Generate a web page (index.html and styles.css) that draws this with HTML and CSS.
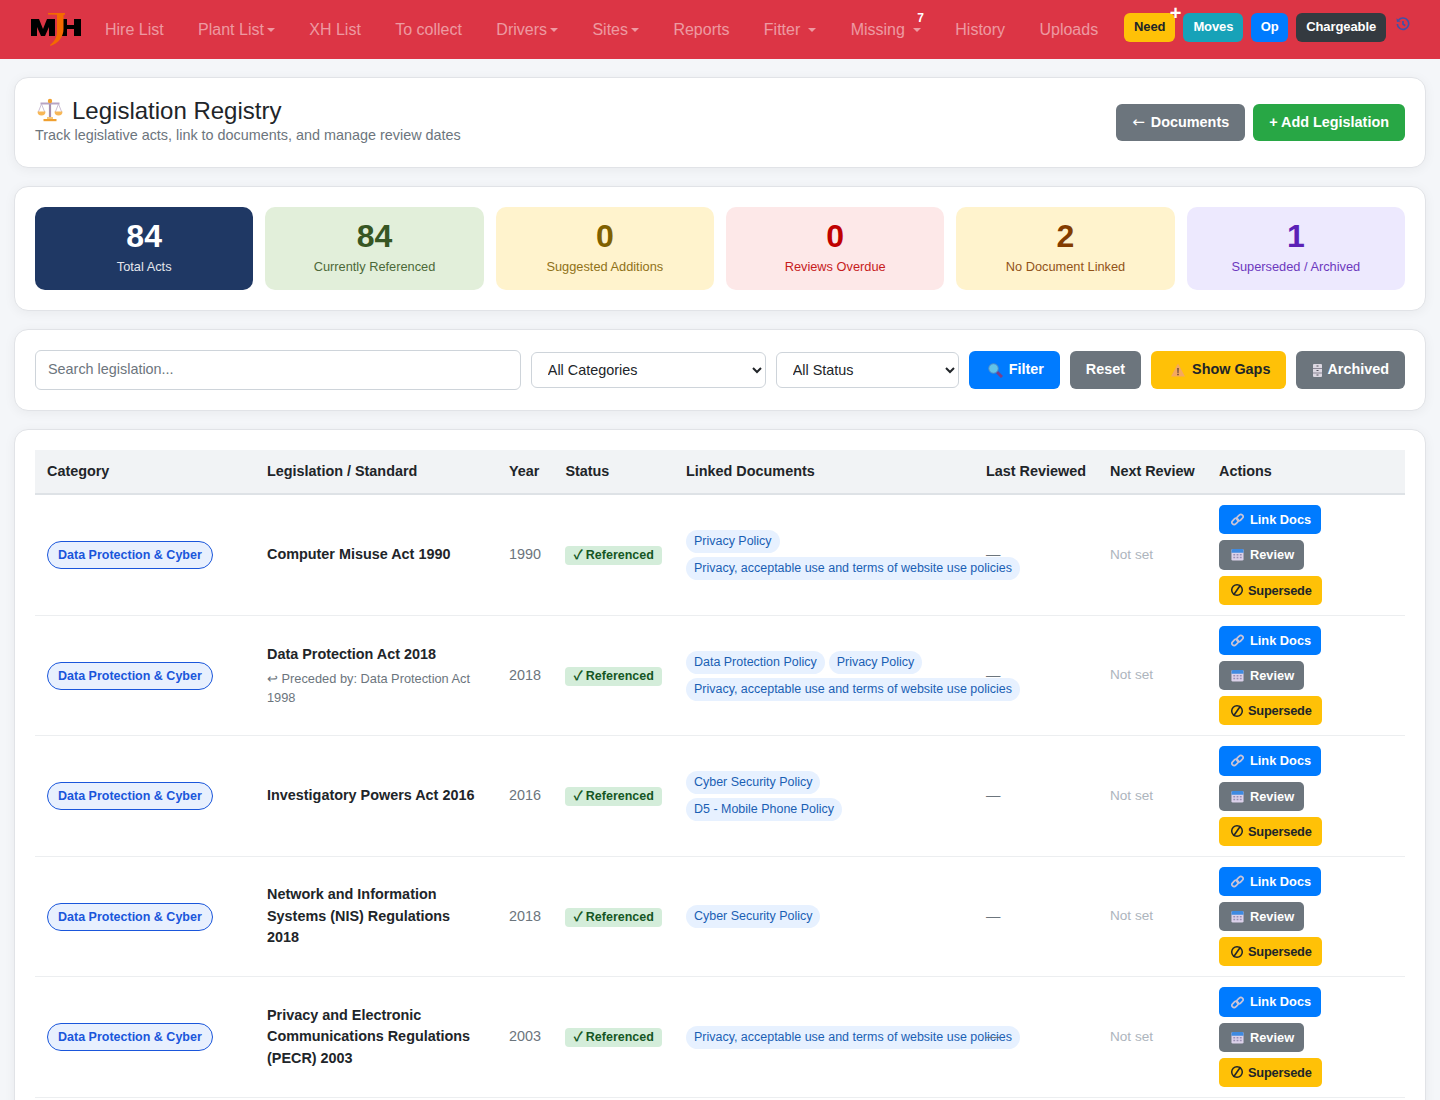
FILE: index.html
```html
<!DOCTYPE html>
<html lang="en">
<head>
<meta charset="utf-8">
<title>Legislation Registry</title>
<link rel="stylesheet" href="styles.css">
</head>
<body>
<svg class="defs" width="0" height="0" aria-hidden="true">
  <defs>
    <symbol id="i-link" viewBox="0 0 14 14"><g fill="none" stroke="#c9c4d8" stroke-width="1.800"><rect x="0.600" y="6.700" width="7.600" height="4.800" rx="2.400" transform="rotate(-45 4.400 9.100)"/><rect x="5.800" y="2.500" width="7.600" height="4.800" rx="2.400" transform="rotate(-45 9.600 4.900)"/></g></symbol>
    <symbol id="i-cal" viewBox="0 0 14 14"><rect x="0.500" y="1" width="13" height="12.500" rx="1.500" fill="#dcd2ea"/><path d="M.5 2.500A1.500 1.500 0 0 1 2 1h10a1.500 1.500 0 0 1 1.500 1.500V5H.5z" fill="#3f8ae0"/><path d="M2.500 6.500h2v1.500h-2zM6 6.500h2v1.500H6zM9.500 6.500h2v1.500h-2zM2.500 9.500h2V11h-2zM6 9.500h2V11H6zM9.500 9.500h2V11h-2z" fill="#9a8fb5"/></symbol>
    <symbol id="i-no" viewBox="0 0 14 14"><circle cx="7" cy="7" r="5.300" fill="none" stroke="#212529" stroke-width="1.500"/><path d="M3.500 12L10.500 2" stroke="#212529" stroke-width="1.600"/></symbol>
  </defs>
</svg>
<nav class="nav">
  <a class="brand" href="#" aria-label="MJH">
    <svg width="52" height="36" viewBox="0 0 52 36"><path d="M1 8h8l4 10 4-10h8v17h-6v-9l-4 9h-4l-4-9v9H1z" fill="#000"/><path d="M30 8h7v6h7V8h7v17h-7v-7h-7v7h-7z" fill="#000"/><path d="M18 2h17v1.500l-1 .5c-.5 0-.5 .5-.5 1v13c0 8-5 14-13 17l-.5-1c4-3 7-7 7-14V4.500c0-.5 0-.7-.5-.7l-8.500-.3z" fill="#f46a00"/></svg>
  </a>
  <ul class="menu">
    <li><a href="#">Hire List</a></li>
    <li><a href="#" class="caret">Plant List</a></li>
    <li><a href="#">XH List</a></li>
    <li><a href="#">To collect</a></li>
    <li><a href="#" class="caret">Drivers</a></li>
    <li><a href="#" class="caret">Sites</a></li>
    <li><a href="#">Reports</a></li>
    <li><a href="#" class="caret wide">Fitter</a></li>
    <li class="missing"><a href="#" class="caret wide">Missing</a><b class="sup">7</b></li>
    <li><a href="#">History</a></li>
    <li><a href="#">Uploads</a></li>
  </ul>
  <div class="quick">
    <a class="qbtn q-need" href="#">Need<span class="plus">+</span></a>
    <a class="qbtn q-moves" href="#">Moves</a>
    <a class="qbtn q-op" href="#">Op</a>
    <a class="qbtn q-charge" href="#">Chargeable</a>
    <svg class="hist" width="14" height="14" viewBox="0 0 16 16"><path d="M3 3.500A6.500 6.500 0 1 1 1.500 8" fill="none" stroke="#3f51a8" stroke-width="1.900"/><path d="M.5 1.500l.6 4.200 4.200-.6z" fill="#3f51a8"/><path d="M8 4.500V8l2.500 2" fill="none" stroke="#3f51a8" stroke-width="1.900"/></svg>
  </div>
</nav>

<main class="page">
  <section class="card head">
    <div class="head-text">
      <h1 class="title">
        <svg class="scale" width="26" height="24" viewBox="0 0 26 24"><path d="M13 2v18" stroke="#a48fae" stroke-width="2.200"/><path d="M3.500 5.500h19" stroke="#b7a5c4" stroke-width="2"/><circle cx="13" cy="3" r="2.200" fill="#f0a030"/><path d="M4.500 6L1.300 14M4.500 6L7.700 14M21.500 6L18.300 14M21.500 6L24.700 14" stroke="#c5b8cf" stroke-width=".9" fill="none"/><path d="M.5 13.500h8a4 4 0 0 1-8 0zM17.500 13.500h8a4 4 0 0 1-8 0z" fill="#f7b757"/><path d="M6.500 21h13v2.200h-13z" fill="#f0a030"/><path d="M10 19h6v2h-6z" fill="#f7c878"/></svg>
        Legislation Registry
      </h1>
      <p class="sub">Track legislative acts, link to documents, and manage review dates</p>
    </div>
    <div class="head-actions">
      <a class="btn btn-grey" href="#"><span class="arrow">←</span>Documents</a>
      <a class="btn btn-green" href="#">+ Add Legislation</a>
    </div>
  </section>

  <section class="card stats">
    <div class="stat s-navy"><strong>84</strong><span>Total Acts</span></div>
    <div class="stat s-green"><strong>84</strong><span>Currently Referenced</span></div>
    <div class="stat s-yellow"><strong>0</strong><span>Suggested Additions</span></div>
    <div class="stat s-red"><strong>0</strong><span>Reviews Overdue</span></div>
    <div class="stat s-amber"><strong>2</strong><span>No Document Linked</span></div>
    <div class="stat s-purple"><strong>1</strong><span>Superseded / Archived</span></div>
  </section>

  <section class="card filters">
    <input class="search" type="text" placeholder="Search legislation...">
    <select class="sel sel-cat"><option>All Categories</option></select>
    <select class="sel sel-status"><option>All Status</option></select>
    <a class="btn btn-blue" href="#"><svg class="ico-f" width="15" height="15" viewBox="0 0 15 15"><path d="M8.500 8.500l5.500 5.500" stroke="#7a3f8a" stroke-width="3"/><circle cx="5.500" cy="5.500" r="4.800" fill="#62c3e8" stroke="#4a86c8"/></svg>Filter</a>
    <a class="btn btn-grey" href="#">Reset</a>
    <a class="btn btn-yellow" href="#"><svg class="ico-w" width="14" height="14" viewBox="0 0 14 14"><path d="M7 .5L14 13.500H0z" fill="#f5a860"/><path d="M6.300 5h1.400l-.2 5h-1zM6.300 10.800h1.400v1.500H6.300z" fill="#5a4030"/></svg>Show Gaps</a>
    <a class="btn btn-grey" href="#"><svg class="ico-a" width="9" height="13" viewBox="0 0 9 13"><rect width="9" height="13" rx="1" fill="#dcd8e2"/><path d="M0 4h9v1H0zM0 8.500h9v1H0z" fill="#8a8694"/><path d="M3.500 1.500h2v1h-2zM3.500 6h2v1h-2zM3.500 10.500h2v1h-2z" fill="#55525c"/></svg>Archived</a>
  </section>

  <section class="card tablecard">
    <table class="reg">
      <colgroup><col class="c1"><col class="c2"><col class="c3"><col class="c4"><col class="c5"><col class="c6"><col class="c7"><col class="c8"></colgroup>
      <thead>
        <tr><th>Category</th><th>Legislation / Standard</th><th>Year</th><th>Status</th><th>Linked Documents</th><th>Last Reviewed</th><th>Next Review</th><th>Actions</th></tr>
      </thead>
      <tbody>
        <tr>
          <td><span class="cat">Data Protection &amp; Cyber</span></td>
          <td><div class="name">Computer Misuse Act 1990</div></td>
          <td class="muted">1990</td>
          <td><span class="ref"><span class="chk">✓</span>Referenced</span></td>
          <td><a class="doc" href="#">Privacy Policy</a><a class="doc" href="#">Privacy, acceptable use and terms of website use policies</a></td>
          <td class="dash">—</td>
          <td class="notset">Not set</td>
          <td class="acts"><a class="act a-blue" href="#"><svg class="aico" width="13" height="13"><use href="#i-link"/></svg>Link Docs</a><a class="act a-grey" href="#"><svg class="aico" width="13" height="13"><use href="#i-cal"/></svg>Review</a><a class="act a-yellow" href="#"><svg class="aico" width="14" height="14"><use href="#i-no"/></svg>Supersede</a></td>
        </tr>
        <tr>
          <td><span class="cat">Data Protection &amp; Cyber</span></td>
          <td><div class="name">Data Protection Act 2018</div><div class="prev">↩ Preceded by: Data Protection Act 1998</div></td>
          <td class="muted">2018</td>
          <td><span class="ref"><span class="chk">✓</span>Referenced</span></td>
          <td><a class="doc" href="#">Data Protection Policy</a><a class="doc" href="#">Privacy Policy</a><a class="doc" href="#">Privacy, acceptable use and terms of website use policies</a></td>
          <td class="dash">—</td>
          <td class="notset">Not set</td>
          <td class="acts"><a class="act a-blue" href="#"><svg class="aico" width="13" height="13"><use href="#i-link"/></svg>Link Docs</a><a class="act a-grey" href="#"><svg class="aico" width="13" height="13"><use href="#i-cal"/></svg>Review</a><a class="act a-yellow" href="#"><svg class="aico" width="14" height="14"><use href="#i-no"/></svg>Supersede</a></td>
        </tr>
        <tr>
          <td><span class="cat">Data Protection &amp; Cyber</span></td>
          <td><div class="name">Investigatory Powers Act 2016</div></td>
          <td class="muted">2016</td>
          <td><span class="ref"><span class="chk">✓</span>Referenced</span></td>
          <td><a class="doc" href="#">Cyber Security Policy</a><a class="doc" href="#">D5 - Mobile Phone Policy</a></td>
          <td class="dash">—</td>
          <td class="notset">Not set</td>
          <td class="acts"><a class="act a-blue" href="#"><svg class="aico" width="13" height="13"><use href="#i-link"/></svg>Link Docs</a><a class="act a-grey" href="#"><svg class="aico" width="13" height="13"><use href="#i-cal"/></svg>Review</a><a class="act a-yellow" href="#"><svg class="aico" width="14" height="14"><use href="#i-no"/></svg>Supersede</a></td>
        </tr>
        <tr>
          <td><span class="cat">Data Protection &amp; Cyber</span></td>
          <td><div class="name">Network and Information Systems (NIS) Regulations 2018</div></td>
          <td class="muted">2018</td>
          <td><span class="ref"><span class="chk">✓</span>Referenced</span></td>
          <td><a class="doc" href="#">Cyber Security Policy</a></td>
          <td class="dash">—</td>
          <td class="notset">Not set</td>
          <td class="acts"><a class="act a-blue" href="#"><svg class="aico" width="13" height="13"><use href="#i-link"/></svg>Link Docs</a><a class="act a-grey" href="#"><svg class="aico" width="13" height="13"><use href="#i-cal"/></svg>Review</a><a class="act a-yellow" href="#"><svg class="aico" width="14" height="14"><use href="#i-no"/></svg>Supersede</a></td>
        </tr>
        <tr>
          <td><span class="cat">Data Protection &amp; Cyber</span></td>
          <td><div class="name">Privacy and Electronic Communications Regulations (PECR) 2003</div></td>
          <td class="muted">2003</td>
          <td><span class="ref"><span class="chk">✓</span>Referenced</span></td>
          <td><a class="doc" href="#">Privacy, acceptable use and terms of website use policies</a></td>
          <td class="dash">—</td>
          <td class="notset">Not set</td>
          <td class="acts"><a class="act a-blue" href="#"><svg class="aico" width="13" height="13"><use href="#i-link"/></svg>Link Docs</a><a class="act a-grey" href="#"><svg class="aico" width="13" height="13"><use href="#i-cal"/></svg>Review</a><a class="act a-yellow" href="#"><svg class="aico" width="14" height="14"><use href="#i-no"/></svg>Supersede</a></td>
        </tr>
      </tbody>
    </table>
  </section>
</main>
</body>
</html>
```
FILE: styles.css
```css
* { box-sizing: border-box; }
html, body { margin: 0; padding: 0; }
body { background: #f4f6f9; color: #212529; font-family: "Liberation Sans", Arial, sans-serif; font-size: 16px; line-height: 1.5; height: 1100px; overflow: hidden; }
a { text-decoration: none; color: inherit; }
.defs { position: absolute; }

.nav { display: flex; align-items: flex-start; height: 59px; background: #dc3545; padding: 11px 16px 0 30px; position: relative; }
.brand { display: block; width: 52px; height: 36px; margin-right: 15px; }
.menu { display: flex; list-style: none; margin: 0; padding: 0; }
.menu li { position: relative; padding: 7px 8px 0; margin-right: 18.4px; white-space: nowrap; }
.menu a { color: rgba(255,255,255,.5); font-size: 16px; line-height: 24px; display: block; }
.caret::after { content: ""; display: inline-block; margin-left: 3px; vertical-align: 3px; border-top: 4px solid rgba(255,255,255,.5); border-left: 4px solid transparent; border-right: 4px solid transparent; }
.caret.wide::after { margin-left: 8px; }
.sup { position: absolute; top: 0; right: 5px; color: #fff; font-size: 12px; line-height: 14px; }
.quick { display: flex; gap: 8px; position: absolute; left: 1124px; top: 13px; align-items: flex-start; }
.qbtn { position: relative; height: 29px; padding: 0 10px; border-radius: 6px; font-size: 13px; font-weight: 700; line-height: 28px; color: #fff; letter-spacing: -.1px; }
.q-need { background: #ffc107; color: #212529; }
.q-moves { background: #17a2b8; }
.q-op { background: #007bff; padding: 0 9.5px; }
.q-charge { background: #343a40; }
.plus { position: absolute; right: -6px; top: -12px; color: #fff; font-size: 20px; line-height: 24px; font-weight: 700; letter-spacing: 0; }
.hist { margin: 4px 0 0 2px; }

.page { padding: 18px 14px 0; display: flex; flex-direction: column; gap: 18px; }
.card { background: #fff; border: 1px solid #e1e3e7; border-radius: 14px; box-shadow: 0 2px 12px rgba(0,0,0,.05); }

.head { height: 91px; display: flex; justify-content: space-between; align-items: center; padding: 0 20px; }
.head-text { padding-bottom: 5px; }
.title { margin: 0; font-size: 24px; font-weight: 400; line-height: 29px; color: #212529; display: flex; align-items: center; gap: 9px; padding-left: 2px; }
.sub { margin: 0; color: #6c757d; font-size: 14.4px; line-height: 20px; }
.head-actions { display: flex; gap: 8px; }
.head-actions .btn { height: 37px; }
.arrow { font-family: "DejaVu Sans", sans-serif; font-weight: 400; font-size: 15px; margin-right: 6px; }

.btn { display: inline-flex; align-items: center; justify-content: center; height: 38px; padding: 0 16px; border-radius: 6px; font-size: 14.4px; font-weight: 700; color: #fff; white-space: nowrap; }
.btn-grey { background: #6c757d; }
.btn-green { background: #28a745; }
.btn-blue { background: #007bff; }
.btn-yellow { background: #ffc107; color: #212529; }
.ico-f { margin: 0 6px 0 3px; }
.ico-w { margin: 0 7px 0 4px; }
.ico-a { margin: 0 5px 0 1px; }

.stats { height: 125px; display: grid; grid-template-columns: repeat(6, 1fr); gap: 12px; padding: 20px; }
.stat { border-radius: 10px; display: flex; flex-direction: column; align-items: center; padding-top: 9px; }
.stat strong { font-size: 32px; line-height: 40px; font-weight: 700; margin-bottom: 1px; }
.stat span { font-size: 12.8px; line-height: 20px; opacity: .88; }
.s-navy { background: #1f3864; color: #fff; }
.s-green { background: #e2efda; color: #375623; }
.s-yellow { background: #fff3cd; color: #7f6000; }
.s-red { background: #fde8e8; color: #c00000; }
.s-amber { background: #fff3cd; color: #833c00; }
.s-purple { background: #ede9fe; color: #5b21b6; }

.filters { height: 82px; display: flex; align-items: center; gap: 10px; padding: 0 20px; }
.search { width: 486px; height: 40px; border: 1px solid #ced4da; border-radius: 6px; padding: 0 12px 2px; font: 14.4px "Liberation Sans", Arial, sans-serif; color: #212529; }
.search::placeholder { color: #6c757d; opacity: 1; }
.sel { height: 36px; border: 1px solid #ced4da; border-radius: 6px; background: #fff; padding: 0 12px; font: 14.4px "Liberation Sans", Arial, sans-serif; color: #212529; }
.sel-cat { width: 235px; }
.sel-status { width: 183px; }

.tablecard { padding: 20px; }
.reg { width: 100%; border-collapse: collapse; table-layout: fixed; }
.c1 { width: 220px; } .c2 { width: 242px; } .c3 { width: 56.4px; } .c4 { width: 120.600px; } .c5 { width: 300px; } .c6 { width: 124px; } .c7 { width: 109px; } .c8 { width: 198px; }
.reg th { background: #f1f3f5; text-align: left; height: 44.2px; padding: 0 12px; font-size: 14.4px; font-weight: 700; color: #212529; border-bottom: 2px solid #dee2e6; white-space: nowrap; }
.reg td { padding: 10px 12px; border-bottom: 1px solid #eceef0; vertical-align: middle; font-size: 14.4px; }
.cat { display: inline-block; border: 1px solid #1a56db; border-radius: 999px; background: #e8f0fe; color: #1a56db; font-size: 12.5px; font-weight: 700; line-height: 16px; padding: 5px 10px; white-space: nowrap; }
.name { font-weight: 700; line-height: 21.6px; font-size: 14.4px; }
.prev { color: #6c757d; font-size: 12.8px; line-height: 19.2px; margin-top: 3px; }
.muted { color: #6c757d; }
.ref { display: inline-block; height: 19px; background: #d4edda; color: #155724; font-size: 12.5px; font-weight: 700; line-height: 19px; padding: 0 8px; border-radius: 4px; white-space: nowrap; }
.chk { font-family: "Noto Sans CJK SC", "DejaVu Sans", sans-serif; margin-right: 3px; font-size: 13px; line-height: 0; }
.doc { display: inline-block; background: #e7f1ff; color: #1a5fb4; font-size: 12.48px; line-height: 17px; padding: 3px 8px; border-radius: 12px; margin: 2px 4px 2px 0; white-space: nowrap; }
.dash { color: #6c757d; }
.reg .notset { color: #adb5bd; font-size: 13.6px; }
.act { display: flex; align-items: center; width: fit-content; height: 29.2px; border-radius: 5px; padding: 0 10px 0 12px; font-size: 12.8px; font-weight: 700; color: #fff; margin-bottom: 6px; white-space: nowrap; }
.act:last-child { margin-bottom: 0; }
.aico { margin-right: 6px; }
.a-blue { background: #007bff; }
.a-grey { background: #6c757d; }
.a-yellow { background: #ffc107; color: #212529; padding-left: 11px; letter-spacing: -.2px; }
.a-yellow .aico { margin-right: 4px; }
```
